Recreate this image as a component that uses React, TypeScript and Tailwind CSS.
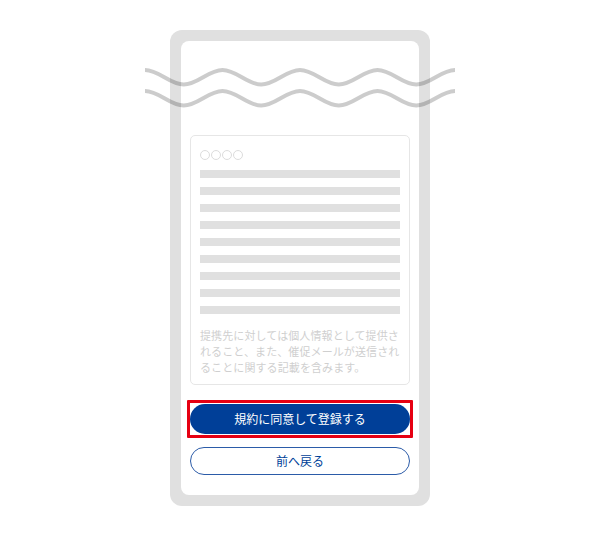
const HALF = 38.75;

function wavePath(peakY: number, troughY: number) {
  let d = `M0 ${peakY}`;
  for (let i = 0; i < 8; i++) {
    const x0 = i * HALF;
    const from = i % 2 === 0 ? peakY : troughY;
    const to = i % 2 === 0 ? troughY : peakY;
    d += ` C${(x0 + HALF * 0.364).toFixed(2)} ${from} ${(x0 + HALF * 0.636).toFixed(2)} ${to} ${(x0 + HALF).toFixed(2)} ${to}`;
  }
  return d;
}

function Waves() {
  return (
    <svg
      width="310"
      height="50"
      viewBox="0 0 310 50"
      fill="none"
      aria-hidden="true"
      className="pointer-events-none absolute left-[-25px] top-[30px]"
    >
      <path d={wavePath(10, 24.5)} stroke="#000" strokeOpacity="0.2" strokeWidth="4" />
      <path d={wavePath(31, 45.5)} stroke="#000" strokeOpacity="0.2" strokeWidth="4" />
    </svg>
  );
}

export default function App() {
  const bars = Array.from({ length: 9 });

  return (
    <div
      className="flex h-[536px] w-[600px] justify-center bg-white pt-[30px]"
      style={{ fontFamily: '"Noto Sans CJK JP", "Noto Sans", sans-serif' }}
    >
      <div className="relative h-[476px] w-[260px]">
        <div className="h-full w-full rounded-[12px] bg-[#e0e0e0] p-[11px]">
          <div className="flex h-full flex-col rounded-[8px] bg-white px-[9px] pt-[94px]">
            <div className="h-[250px] rounded-[5px] border border-[#e6e6e6] px-[9px] pt-[14px]">
              <div className="flex h-[10px] gap-[1px]">
                {[0, 1, 2, 3].map((i) => (
                  <span key={i} className="h-[10px] w-[10px] rounded-full border border-[#dcdcdc]" />
                ))}
              </div>
              <div className="mt-[10px] flex flex-col gap-[9px]">
                {bars.map((_, i) => (
                  <div key={i} className="h-[8px] bg-[#e0e0e0]" />
                ))}
              </div>
              <p className="mt-[13px] whitespace-nowrap text-[11px] leading-[16px] tracking-[0.1px] text-[#cfcfcf]">
                提携先に対しては個人情報として提供さ
                <br />
                れること、また、催促メールが送信され
                <br />
                ることに関する記載を含みます。
              </p>
            </div>

            <div className="mt-[15px] -mx-[3px] rounded-[1px] border-[3px] border-[#e60012] px-0 py-[1px]">
              <button
                type="button"
                className="flex h-[30px] w-full items-center justify-center rounded-full bg-[#003f98] text-[12px] text-white"
              >
                規約に同意して登録する
              </button>
            </div>

            <button
              type="button"
              className="mt-[9px] flex h-[28px] w-full items-center justify-center rounded-full border border-[#2b5ba8] bg-white text-[12px] text-[#003f98]"
            >
              前へ戻る
            </button>
          </div>
        </div>
        <Waves />
      </div>
    </div>
  );
}
